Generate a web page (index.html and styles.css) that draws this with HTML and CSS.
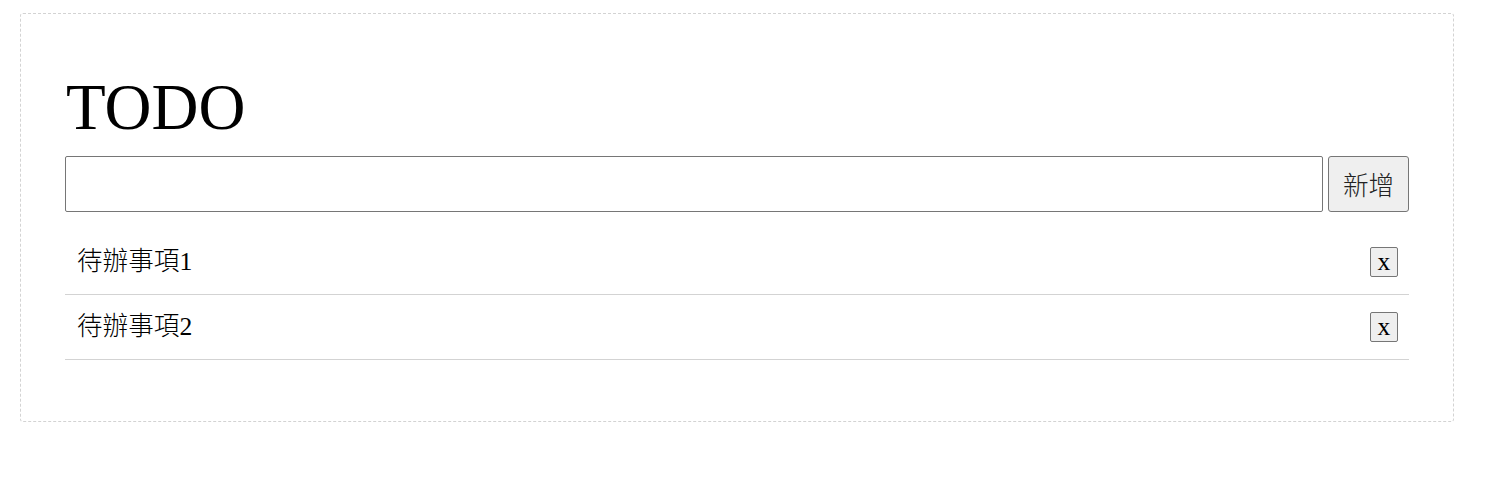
FILE: index.html
```html
<!DOCTYPE html>
<html lang="zh-Hant">
<head>
<meta charset="utf-8">
<title>TODO</title>
<link rel="stylesheet" href="styles.css">
</head>
<body>
<div class="app">
  <h1 class="title">TODO</h1>
  <form class="add-form" onsubmit="return false">
    <input class="add-input" type="text">
    <button class="add-btn" type="button">新增</button>
  </form>
  <ul class="todo-list">
    <li class="todo-item"><span class="todo-text">待辦事項1</span><button class="del-btn" type="button">x</button></li>
    <li class="todo-item"><span class="todo-text">待辦事項2</span><button class="del-btn" type="button">x</button></li>
  </ul>
</div>
</body>
</html>
```
FILE: styles.css
```css
html, body {
  margin: 0;
  padding: 0;
  background: #fff;
}
body {
  font-family: "Liberation Serif", "Noto Sans CJK TC", serif;
  color: #000;
  padding: 13px 20px;
}
.app {
  width: 1344px;
  padding: 44px;
  border: 1px dashed #d3d3d3;
  border-radius: 3px;
}
.title {
  margin: 10px 0 10px;
  padding-left: 1px;
  font-size: 65px;
  font-weight: normal;
  line-height: 78px;
}
.add-form {
  display: flex;
  gap: 5px;
  margin: 0;
}
.add-input {
  flex: 1;
  height: 56px;
  box-sizing: border-box;
  border: 1px solid #767676;
  border-radius: 2px;
  font-size: 24px;
  padding: 0 8px;
  margin: 0;
}
.add-btn {
  width: 81px;
  height: 56px;
  box-sizing: border-box;
  margin: 0;
  border: 1px solid #767676;
  border-radius: 3px;
  background: #efefef;
  font-family: "Noto Sans CJK TC", sans-serif;
  font-size: 25.6px;
  font-weight: 300;
  line-height: 30px;
  color: #222;
  padding: 0;
}
.todo-list {
  list-style: none;
  margin: 18px 0 17px;
  padding: 0;
}
.todo-item {
  display: flex;
  align-items: center;
  justify-content: space-between;
  height: 64px;
  padding: 0 11px 0 12px;
  border-bottom: 1px solid #d3d3d3;
}
.todo-text {
  font-size: 25.6px;
  font-weight: 300;
  line-height: 30px;
}
.del-btn {
  width: 28px;
  height: 30px;
  box-sizing: border-box;
  margin: 0;
  padding: 0;
  border: 1px solid #767676;
  border-radius: 2px;
  background: #efefef;
  font-family: "Liberation Serif", serif;
  font-size: 25.6px;
  line-height: 26px;
  color: #000;
}
```
